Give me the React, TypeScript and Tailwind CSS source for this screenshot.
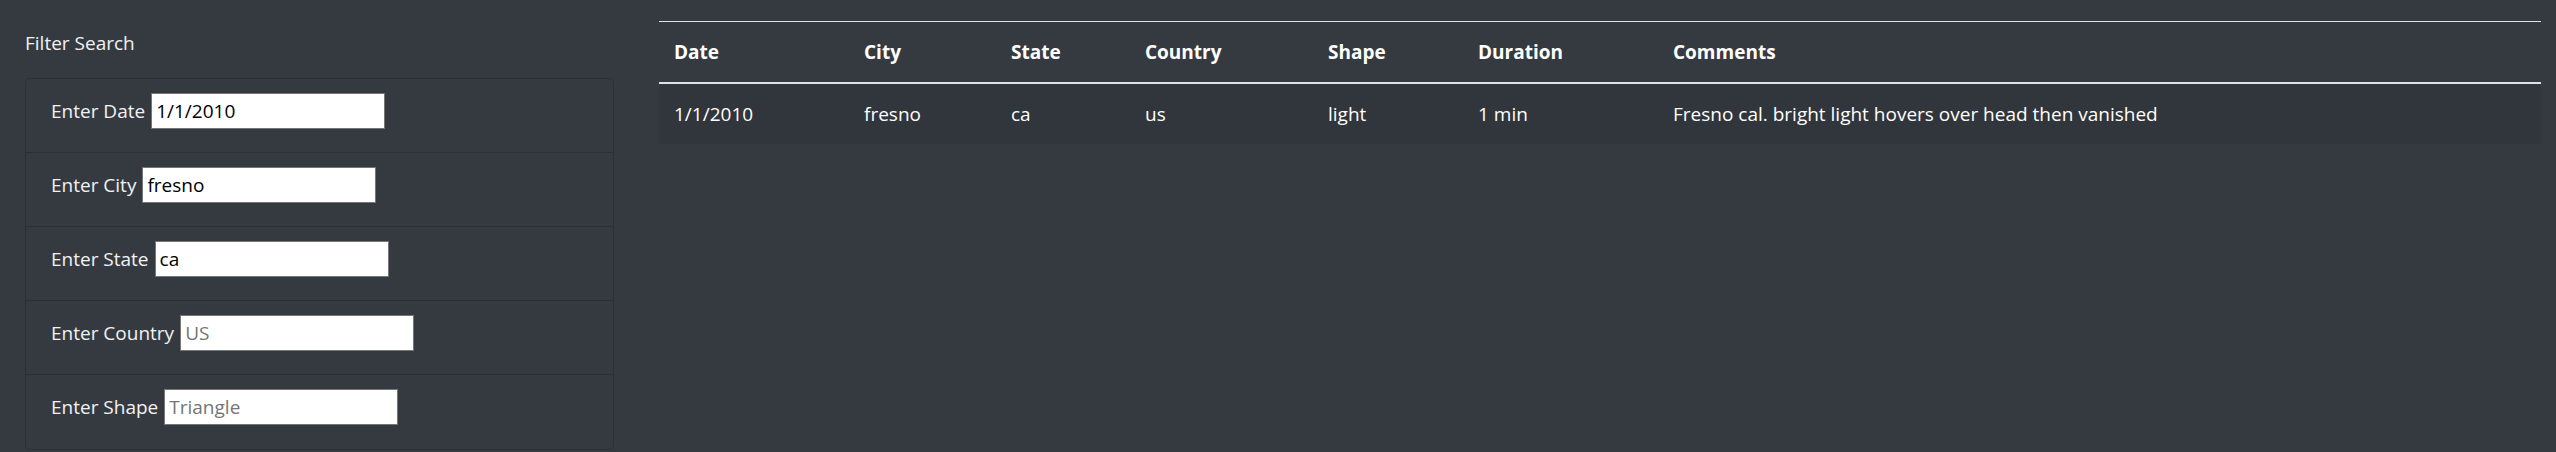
import React from 'react';

const filters = [
  { label: 'Enter Date', value: '1/1/2010', placeholder: '' },
  { label: 'Enter City', value: 'fresno', placeholder: '' },
  { label: 'Enter State', value: 'ca', placeholder: '' },
  { label: 'Enter Country', value: '', placeholder: 'US' },
  { label: 'Enter Shape', value: '', placeholder: 'Triangle' },
];

const sightings = [
  {
    date: '1/1/2010',
    city: 'fresno',
    state: 'ca',
    country: 'us',
    shape: 'light',
    duration: '1 min',
    comments: 'Fresno cal. bright light hovers over head then vanished',
  },
];

export default function App() {
  return (
    <main
      className="min-h-[452px] bg-[#353a41] text-white text-[19px] flex"
      style={{ fontFamily: '"Open Sans", "Noto Sans", sans-serif' }}
    >
      {/* filters */}
      <aside className="w-[614px] shrink-0 pl-[25px] pt-[28px]">
        <h2 className="leading-[30px] font-normal text-[#f1f2f4]">Filter Search</h2>
        <ul className="mt-[20px] border border-[#2c3036] rounded-[5px]">
          {filters.map((f, i) => (
            <li
              key={f.label}
              className={`h-[74px] px-[25px] pt-[14px] flex items-baseline gap-[6px] ${
                i < filters.length - 1 ? 'border-b border-[#2c3036]' : ''
              }`}
            >
              <label className="text-[#f1f2f4] leading-[30px]">{f.label}</label>
              <input
                defaultValue={f.value}
                placeholder={f.placeholder}
                className="w-[234px] h-[36px] bg-white text-black border border-[#767676] px-[4px] placeholder:text-[#757575] outline-none"
              />
            </li>
          ))}
        </ul>
      </aside>

      {/* results */}
      <section className="flex-1 pl-[45px] pr-[15px] pt-[21px]">
        <table className="w-full table-fixed border-collapse">
          <thead>
            <tr className="border-t border-[#dee2e6] border-b-[2.5px] border-b-[#dee2e6]">
              <th className="w-[190px] px-[15px] py-[15px] leading-[30px] text-left font-bold">Date</th>
              <th className="w-[147px] px-[15px] py-[15px] leading-[30px] text-left font-bold">City</th>
              <th className="w-[134px] px-[15px] py-[15px] leading-[30px] text-left font-bold">State</th>
              <th className="w-[183px] px-[15px] py-[15px] leading-[30px] text-left font-bold">Country</th>
              <th className="w-[150px] px-[15px] py-[15px] leading-[30px] text-left font-bold">Shape</th>
              <th className="w-[195px] px-[15px] py-[15px] leading-[30px] text-left font-bold">Duration</th>
              <th className="px-[15px] py-[15px] leading-[30px] text-left font-bold">Comments</th>
            </tr>
          </thead>
          <tbody>
            {sightings.map((s, i) => (
              <tr key={i} className="bg-[#31353c]">
                <td className="px-[15px] py-[15px] leading-[30px]">{s.date}</td>
                <td className="px-[15px] py-[15px] leading-[30px]">{s.city}</td>
                <td className="px-[15px] py-[15px] leading-[30px]">{s.state}</td>
                <td className="px-[15px] py-[15px] leading-[30px]">{s.country}</td>
                <td className="px-[15px] py-[15px] leading-[30px]">{s.shape}</td>
                <td className="px-[15px] py-[15px] leading-[30px]">{s.duration}</td>
                <td className="px-[15px] py-[15px] leading-[30px]">{s.comments}</td>
              </tr>
            ))}
          </tbody>
        </table>
      </section>
    </main>
  );
}
